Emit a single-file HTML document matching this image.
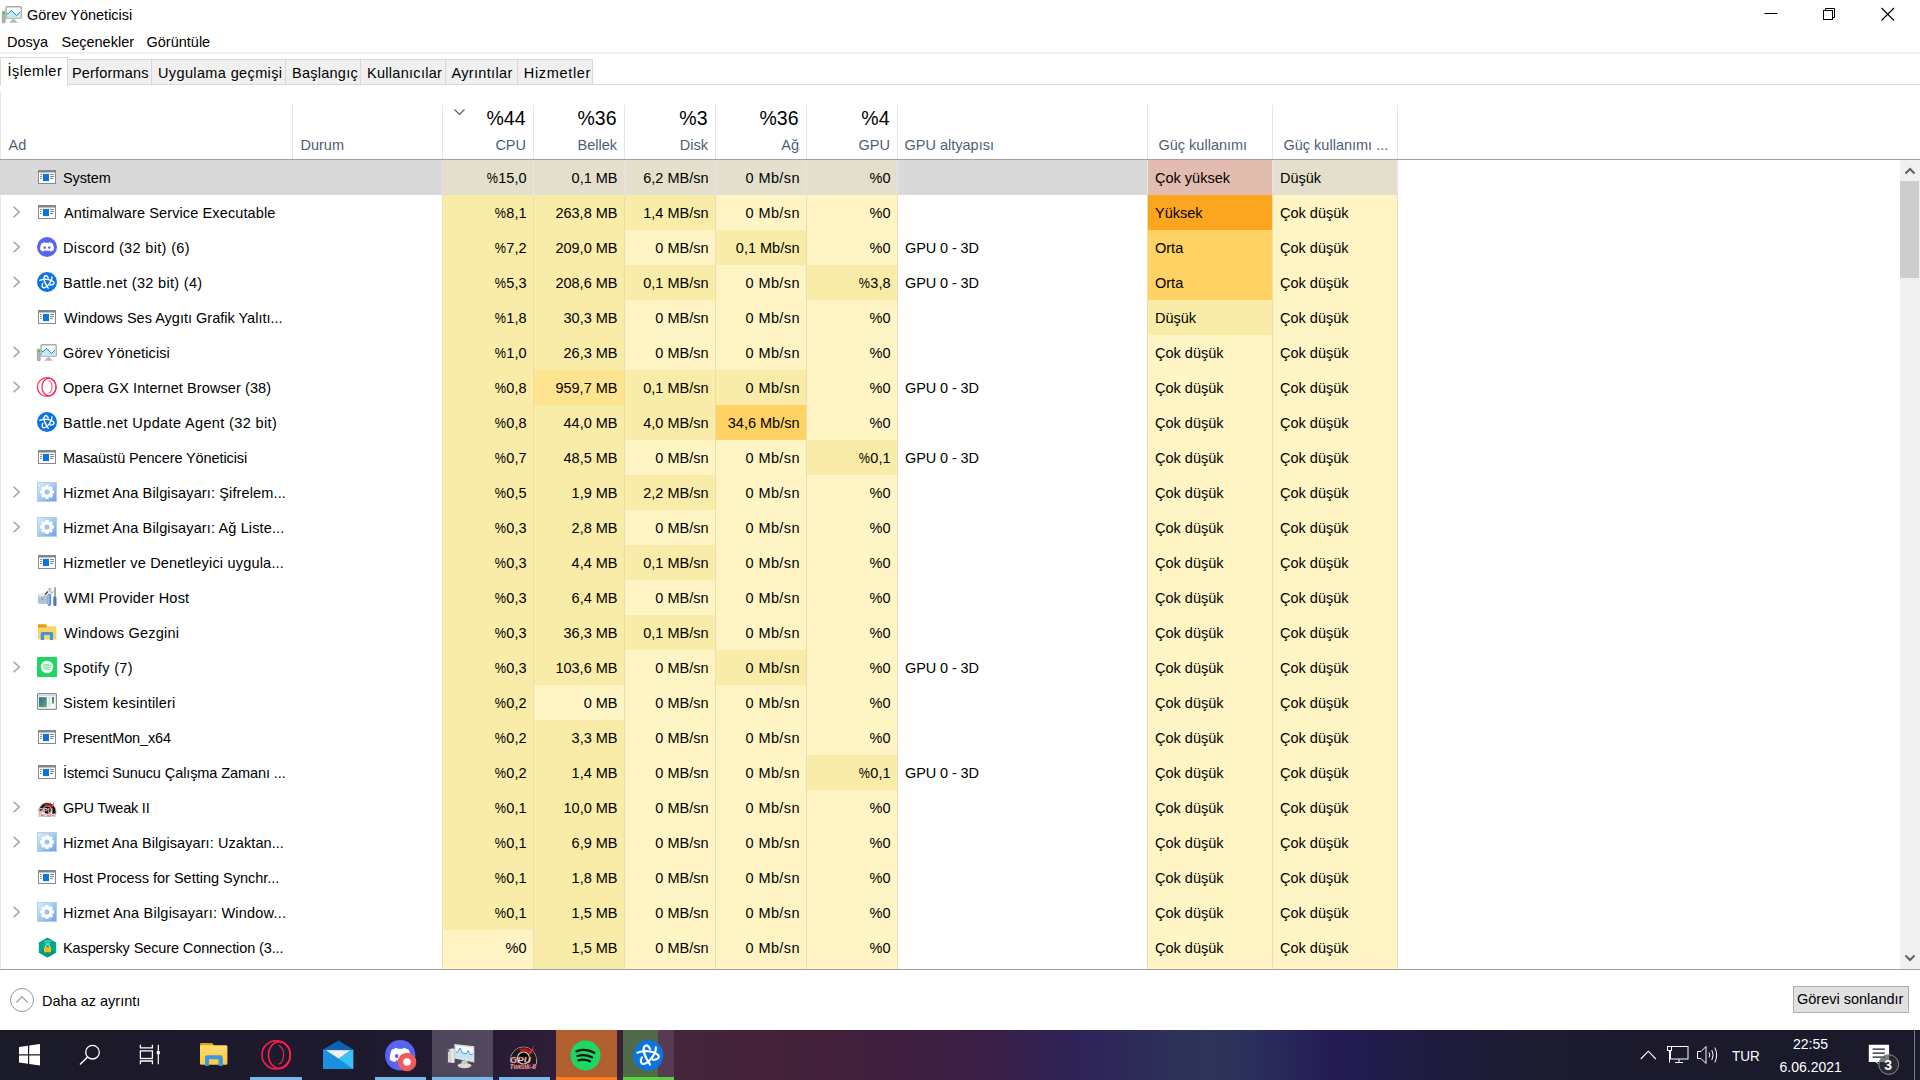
<!DOCTYPE html><html><head><meta charset='utf-8'><style>
*{margin:0;padding:0;box-sizing:border-box}
html,body{width:1920px;height:1080px;overflow:hidden;background:#fff;font-family:"Liberation Sans",sans-serif;color:#000}
.t{position:absolute;white-space:nowrap}
.r{position:absolute}
svg{position:absolute;overflow:visible}
</style></head><body><svg style="left:2px;top:6px" width="20" height="18" viewBox="0 0 20 18"><rect x="0.3" y="5.2" width="2.9" height="11.6" rx="0.9" fill="#b4b4b4" stroke="#8c8c8c" stroke-width="0.6"/><rect x="0.7" y="6.1" width="2.1" height="2" fill="#35d235"/><path d="M7 16.8 L11.5 12.6 L16 16.8 Z" fill="#b9b9b9"/><rect x="4.1" y="0.75" width="15.1" height="11.4" rx="0.8" fill="#fff" stroke="#ababab" stroke-width="1.4"/><path d="M5 7.6 L6.3 7.6 L9.5 4.3 L14.5 9.6 L17.7 6.4 L18.5 6.4 V11.4 H5 Z" fill="#c2ebfa"/><path d="M5 7.6 L6.3 7.6 L9.5 4.3 L14.5 9.6 L18 6.2" fill="none" stroke="#1b7fc9" stroke-width="1"/></svg><div class="t" style="top:7.72px;font-size:14.5px;line-height:14.5px;left:27.00px;">Görev Yöneticisi</div><svg style="left:1760px;top:0px" width="140" height="30"><line x1="4.5" y1="13.5" x2="17.5" y2="13.5" stroke="#000" stroke-width="1"/><rect x="63.5" y="10.5" width="9" height="9" fill="none" stroke="#000" stroke-width="1"/><path d="M65.5 10.5 V8.5 H74.5 V17.5 H72.5" fill="none" stroke="#000" stroke-width="1"/><path d="M121.5 8 L134 20.5 M134 8 L121.5 20.5" stroke="#000" stroke-width="1.1"/></svg><div class="t" style="top:34.72px;font-size:14.5px;line-height:14.5px;left:7.00px;">Dosya</div><div class="t" style="top:34.72px;font-size:14.5px;line-height:14.5px;left:61.50px;">Seçenekler</div><div class="t" style="top:34.72px;font-size:14.5px;line-height:14.5px;left:146.50px;">Görüntüle</div><div class="r" style="left:0px;top:52px;width:1920px;height:2px;background:#f0f0f0;"></div><div class="r" style="left:0px;top:84px;width:1920px;height:1px;background:#d9d9d9;"></div><div class="r" style="left:67px;top:59px;width:85px;height:26px;background:#f0f0f0;border:1px solid #d9d9d9;"></div><div class="t" style="top:66.02px;font-size:14.5px;line-height:14.5px;left:72.00px;letter-spacing:0.17px">Performans</div><div class="r" style="left:151px;top:59px;width:135px;height:26px;background:#f0f0f0;border:1px solid #d9d9d9;"></div><div class="t" style="top:66.02px;font-size:14.5px;line-height:14.5px;left:158.00px;letter-spacing:0.37px">Uygulama geçmişi</div><div class="r" style="left:285px;top:59px;width:76px;height:26px;background:#f0f0f0;border:1px solid #d9d9d9;"></div><div class="t" style="top:66.02px;font-size:14.5px;line-height:14.5px;left:292.00px;letter-spacing:0.25px">Başlangıç</div><div class="r" style="left:360px;top:59px;width:86px;height:26px;background:#f0f0f0;border:1px solid #d9d9d9;"></div><div class="t" style="top:66.02px;font-size:14.5px;line-height:14.5px;left:367.00px;letter-spacing:0.29px">Kullanıcılar</div><div class="r" style="left:445px;top:59px;width:73px;height:26px;background:#f0f0f0;border:1px solid #d9d9d9;"></div><div class="t" style="top:66.02px;font-size:14.5px;line-height:14.5px;left:451.50px;letter-spacing:0.33px">Ayrıntılar</div><div class="r" style="left:517px;top:59px;width:76px;height:26px;background:#f0f0f0;border:1px solid #d9d9d9;"></div><div class="t" style="top:66.02px;font-size:14.5px;line-height:14.5px;left:523.80px;letter-spacing:0.67px">Hizmetler</div><div class="r" style="left:0px;top:57px;width:68px;height:29px;background:#fff;border:1px solid #d9d9d9;border-bottom:none;"></div><div class="t" style="top:63.52px;font-size:14.5px;line-height:14.5px;left:7.50px;letter-spacing:0.5px">İşlemler</div><div class="r" style="left:0px;top:92px;width:1px;height:877px;background:#e6e6e6;"></div><div class="r" style="left:292px;top:105px;width:1px;height:54px;background:#e5e5e5;"></div><div class="r" style="left:442px;top:105px;width:1px;height:54px;background:#e5e5e5;"></div><div class="r" style="left:533px;top:105px;width:1px;height:54px;background:#e5e5e5;"></div><div class="r" style="left:624px;top:105px;width:1px;height:54px;background:#e5e5e5;"></div><div class="r" style="left:715px;top:105px;width:1px;height:54px;background:#e5e5e5;"></div><div class="r" style="left:806px;top:105px;width:1px;height:54px;background:#e5e5e5;"></div><div class="r" style="left:897px;top:105px;width:1px;height:54px;background:#e5e5e5;"></div><div class="r" style="left:1147px;top:105px;width:1px;height:54px;background:#e5e5e5;"></div><div class="r" style="left:1272px;top:105px;width:1px;height:54px;background:#e5e5e5;"></div><div class="r" style="left:1397px;top:105px;width:1px;height:54px;background:#e5e5e5;"></div><div class="r" style="left:0px;top:159px;width:1920px;height:1px;background:#a0a0a0;"></div><div class="t" style="top:137.52px;font-size:14.5px;line-height:14.5px;color:#4c607a;left:8.50px;">Ad</div><div class="t" style="top:137.52px;font-size:14.5px;line-height:14.5px;color:#4c607a;left:300.50px;">Durum</div><div class="t" style="top:109.49px;font-size:19.5px;line-height:19.5px;right:1394.50px;">%44</div><div class="t" style="top:137.52px;font-size:14.5px;line-height:14.5px;color:#4c607a;right:1394.00px;">CPU</div><div class="t" style="top:109.49px;font-size:19.5px;line-height:19.5px;right:1303.50px;">%36</div><div class="t" style="top:137.52px;font-size:14.5px;line-height:14.5px;color:#4c607a;right:1303.00px;">Bellek</div><div class="t" style="top:109.49px;font-size:19.5px;line-height:19.5px;right:1212.50px;">%3</div><div class="t" style="top:137.52px;font-size:14.5px;line-height:14.5px;color:#4c607a;right:1212.00px;">Disk</div><div class="t" style="top:109.49px;font-size:19.5px;line-height:19.5px;right:1121.50px;">%36</div><div class="t" style="top:137.52px;font-size:14.5px;line-height:14.5px;color:#4c607a;right:1121.00px;">Ağ</div><div class="t" style="top:109.49px;font-size:19.5px;line-height:19.5px;right:1030.50px;">%4</div><div class="t" style="top:137.52px;font-size:14.5px;line-height:14.5px;color:#4c607a;right:1030.00px;">GPU</div><div class="t" style="top:137.52px;font-size:14.5px;line-height:14.5px;color:#4c607a;left:904.50px;">GPU altyapısı</div><div class="t" style="top:137.52px;font-size:14.5px;line-height:14.5px;color:#4c607a;left:1158.50px;">Güç kullanımı</div><div class="t" style="top:137.52px;font-size:14.5px;line-height:14.5px;color:#4c607a;left:1283.50px;">Güç kullanımı ...</div><svg style="left:453px;top:108px" width="14" height="10"><path d="M1.5 1.5 L6.5 6.5 L11.5 1.5" fill="none" stroke="#4c607a" stroke-width="1.2"/></svg><div class="r" style="left:0px;top:160px;width:1147px;height:35px;background:#d9d9d9;"></div><div class="r" style="left:442px;top:160px;width:91px;height:35px;background:#e3dfcc;"></div><div class="r" style="left:533px;top:160px;width:91px;height:35px;background:#e3dfcc;"></div><div class="r" style="left:624px;top:160px;width:91px;height:35px;background:#e3dfcc;"></div><div class="r" style="left:715px;top:160px;width:91px;height:35px;background:#e3dfcc;"></div><div class="r" style="left:806px;top:160px;width:91px;height:35px;background:#e3dfcc;"></div><div class="r" style="left:1147px;top:160px;width:125px;height:35px;background:#e2bcae;"></div><div class="r" style="left:1272px;top:160px;width:125px;height:35px;background:#e3dfcc;"></div><svg style="left:38px;top:170px" width="18" height="14" viewBox="0 0 18 14"><rect x="0.5" y="0.5" width="17" height="13" fill="#fff" stroke="#868a8e" stroke-width="1"/><rect x="0.5" y="0.5" width="17" height="2" fill="#7e8387"/><rect x="12.6" y="1.7" width="0.9" height="0.8" fill="#c8cacc"/><rect x="14.4" y="1.7" width="0.9" height="0.8" fill="#c8cacc"/><rect x="5" y="3.9" width="6" height="7.2" fill="#0a74da"/><path d="M2.1 4.5h1.7M2.1 6.5h1.7M2.1 8.5h1.7M12.2 4.5h3.7M12.2 6.5h3.7M12.2 8.5h2.7" stroke="#7c7c7c" stroke-width="1"/></svg><div class="t" style="top:171.22px;font-size:14.5px;line-height:14.5px;left:63.00px;letter-spacing:-0.1px">System</div><div class="t" style="top:171.22px;font-size:14.5px;line-height:14.5px;right:1393.50px;"><span style="display:inline-block;transform:scaleX(0.87);transform-origin:100% 50%">%</span>15,0</div><div class="t" style="top:171.22px;font-size:14.5px;line-height:14.5px;right:1302.50px;">0,1 MB</div><div class="t" style="top:171.22px;font-size:14.5px;line-height:14.5px;right:1211.50px;">6,2 MB/sn</div><div class="t" style="top:171.22px;font-size:14.5px;line-height:14.5px;right:1120.10px;letter-spacing:0.4px;">0 Mb/sn</div><div class="t" style="top:171.22px;font-size:14.5px;line-height:14.5px;right:1029.50px;">%0</div><div class="t" style="top:171.22px;font-size:14.5px;line-height:14.5px;left:1155.00px;">Çok yüksek</div><div class="t" style="top:171.22px;font-size:14.5px;line-height:14.5px;left:1280.00px;">Düşük</div><div class="r" style="left:442px;top:195px;width:91px;height:35px;background:#f9eca8;"></div><div class="r" style="left:533px;top:195px;width:91px;height:35px;background:#f9eca8;"></div><div class="r" style="left:624px;top:195px;width:91px;height:35px;background:#f9eca8;"></div><div class="r" style="left:715px;top:195px;width:91px;height:35px;background:#fff4c4;"></div><div class="r" style="left:806px;top:195px;width:91px;height:35px;background:#fff4c4;"></div><div class="r" style="left:1147px;top:195px;width:125px;height:35px;background:#fca61f;"></div><div class="r" style="left:1272px;top:195px;width:125px;height:35px;background:#fff4c4;"></div><svg style="left:12px;top:206px" width="10" height="13"><path d="M1.6 0.8 L7.2 6 L1.6 11.2" fill="none" stroke="#a2a2a2" stroke-width="1.5"/></svg><svg style="left:38px;top:205px" width="18" height="14" viewBox="0 0 18 14"><rect x="0.5" y="0.5" width="17" height="13" fill="#fff" stroke="#868a8e" stroke-width="1"/><rect x="0.5" y="0.5" width="17" height="2" fill="#7e8387"/><rect x="12.6" y="1.7" width="0.9" height="0.8" fill="#c8cacc"/><rect x="14.4" y="1.7" width="0.9" height="0.8" fill="#c8cacc"/><rect x="5" y="3.9" width="6" height="7.2" fill="#0a74da"/><path d="M2.1 4.5h1.7M2.1 6.5h1.7M2.1 8.5h1.7M12.2 4.5h3.7M12.2 6.5h3.7M12.2 8.5h2.7" stroke="#7c7c7c" stroke-width="1"/></svg><div class="t" style="top:206.22px;font-size:14.5px;line-height:14.5px;left:64.00px;letter-spacing:0.119px">Antimalware Service Executable</div><div class="t" style="top:206.22px;font-size:14.5px;line-height:14.5px;right:1393.50px;"><span style="display:inline-block;transform:scaleX(0.87);transform-origin:100% 50%">%</span>8,1</div><div class="t" style="top:206.22px;font-size:14.5px;line-height:14.5px;right:1302.50px;">263,8 MB</div><div class="t" style="top:206.22px;font-size:14.5px;line-height:14.5px;right:1211.50px;">1,4 MB/sn</div><div class="t" style="top:206.22px;font-size:14.5px;line-height:14.5px;right:1120.10px;letter-spacing:0.4px;">0 Mb/sn</div><div class="t" style="top:206.22px;font-size:14.5px;line-height:14.5px;right:1029.50px;">%0</div><div class="t" style="top:206.22px;font-size:14.5px;line-height:14.5px;left:1155.00px;">Yüksek</div><div class="t" style="top:206.22px;font-size:14.5px;line-height:14.5px;left:1280.00px;">Çok düşük</div><div class="r" style="left:442px;top:230px;width:91px;height:35px;background:#f9eca8;"></div><div class="r" style="left:533px;top:230px;width:91px;height:35px;background:#f9eca8;"></div><div class="r" style="left:624px;top:230px;width:91px;height:35px;background:#fff4c4;"></div><div class="r" style="left:715px;top:230px;width:91px;height:35px;background:#f9eca8;"></div><div class="r" style="left:806px;top:230px;width:91px;height:35px;background:#fff4c4;"></div><div class="r" style="left:1147px;top:230px;width:125px;height:35px;background:#ffd264;"></div><div class="r" style="left:1272px;top:230px;width:125px;height:35px;background:#fff4c4;"></div><svg style="left:12px;top:241px" width="10" height="13"><path d="M1.6 0.8 L7.2 6 L1.6 11.2" fill="none" stroke="#a2a2a2" stroke-width="1.5"/></svg><svg style="left:37px;top:237px" width="20" height="20" viewBox="0 0 20 20"><circle cx="10" cy="10" r="10" fill="#5865f2"/><g transform="translate(10,10) scale(1.0)"><path d="M-5.6 -3.6 C-4.2 -4.5 -2.8 -4.8 -2 -4.8 L-1.6 -4.1 C-0.5 -4.3 0.5 -4.3 1.6 -4.1 L2 -4.8 C2.8 -4.8 4.2 -4.5 5.6 -3.6 C6.6 -1.6 7 0.8 6.8 3 C5.6 3.9 4.4 4.4 3.4 4.6 L2.6 3.4 C1 3.9 -1 3.9 -2.6 3.4 L-3.4 4.6 C-4.4 4.4 -5.6 3.9 -6.8 3 C-7 0.8 -6.6 -1.6 -5.6 -3.6 Z" fill="#fff"/><ellipse cx="-2.3" cy="0.6" rx="1.2" ry="1.35" fill="#5865f2"/><ellipse cx="2.3" cy="0.6" rx="1.2" ry="1.35" fill="#5865f2"/></g></svg><div class="t" style="top:241.22px;font-size:14.5px;line-height:14.5px;left:63.00px;letter-spacing:0.342px">Discord (32 bit) (6)</div><div class="t" style="top:241.22px;font-size:14.5px;line-height:14.5px;right:1393.50px;"><span style="display:inline-block;transform:scaleX(0.87);transform-origin:100% 50%">%</span>7,2</div><div class="t" style="top:241.22px;font-size:14.5px;line-height:14.5px;right:1302.50px;">209,0 MB</div><div class="t" style="top:241.22px;font-size:14.5px;line-height:14.5px;right:1211.50px;">0 MB/sn</div><div class="t" style="top:241.22px;font-size:14.5px;line-height:14.5px;right:1120.50px;">0,1 Mb/sn</div><div class="t" style="top:241.22px;font-size:14.5px;line-height:14.5px;right:1029.50px;">%0</div><div class="t" style="top:241.22px;font-size:14.5px;line-height:14.5px;left:905.00px;letter-spacing:-0.1px">GPU 0 - 3D</div><div class="t" style="top:241.22px;font-size:14.5px;line-height:14.5px;left:1155.00px;">Orta</div><div class="t" style="top:241.22px;font-size:14.5px;line-height:14.5px;left:1280.00px;">Çok düşük</div><div class="r" style="left:442px;top:265px;width:91px;height:35px;background:#f9eca8;"></div><div class="r" style="left:533px;top:265px;width:91px;height:35px;background:#f9eca8;"></div><div class="r" style="left:624px;top:265px;width:91px;height:35px;background:#f9eca8;"></div><div class="r" style="left:715px;top:265px;width:91px;height:35px;background:#fff4c4;"></div><div class="r" style="left:806px;top:265px;width:91px;height:35px;background:#f9eca8;"></div><div class="r" style="left:1147px;top:265px;width:125px;height:35px;background:#ffd264;"></div><div class="r" style="left:1272px;top:265px;width:125px;height:35px;background:#fff4c4;"></div><svg style="left:12px;top:276px" width="10" height="13"><path d="M1.6 0.8 L7.2 6 L1.6 11.2" fill="none" stroke="#a2a2a2" stroke-width="1.5"/></svg><svg style="left:37px;top:272px" width="20" height="20" viewBox="0 0 20 20"><circle cx="10" cy="10" r="10" fill="#0a74e0"/><g transform="scale(0.6666666666666666)" fill="none" stroke="#fff" stroke-linecap="round"><path d="M16.8 24.2 C12 17 8.5 8.5 12 5.8 C14 4.5 16 6.5 16.8 9" stroke-width="2.2"/><path d="M4.2 12.5 C10 10.2 20 10.2 24.8 14.8 C27 17.5 23.5 19.8 19.5 19.5" stroke-width="2.1"/><path d="M22.5 7.3 C23 13 16.5 22 11.5 23.5 C8 24.5 6.5 21 8.8 17.2" stroke-width="2.1"/></g></svg><div class="t" style="top:276.22px;font-size:14.5px;line-height:14.5px;left:63.00px;letter-spacing:0.318px">Battle.net (32 bit) (4)</div><div class="t" style="top:276.22px;font-size:14.5px;line-height:14.5px;right:1393.50px;"><span style="display:inline-block;transform:scaleX(0.87);transform-origin:100% 50%">%</span>5,3</div><div class="t" style="top:276.22px;font-size:14.5px;line-height:14.5px;right:1302.50px;">208,6 MB</div><div class="t" style="top:276.22px;font-size:14.5px;line-height:14.5px;right:1211.50px;">0,1 MB/sn</div><div class="t" style="top:276.22px;font-size:14.5px;line-height:14.5px;right:1120.10px;letter-spacing:0.4px;">0 Mb/sn</div><div class="t" style="top:276.22px;font-size:14.5px;line-height:14.5px;right:1029.50px;"><span style="display:inline-block;transform:scaleX(0.87);transform-origin:100% 50%">%</span>3,8</div><div class="t" style="top:276.22px;font-size:14.5px;line-height:14.5px;left:905.00px;letter-spacing:-0.1px">GPU 0 - 3D</div><div class="t" style="top:276.22px;font-size:14.5px;line-height:14.5px;left:1155.00px;">Orta</div><div class="t" style="top:276.22px;font-size:14.5px;line-height:14.5px;left:1280.00px;">Çok düşük</div><div class="r" style="left:442px;top:300px;width:91px;height:35px;background:#f9eca8;"></div><div class="r" style="left:533px;top:300px;width:91px;height:35px;background:#f9eca8;"></div><div class="r" style="left:624px;top:300px;width:91px;height:35px;background:#fff4c4;"></div><div class="r" style="left:715px;top:300px;width:91px;height:35px;background:#fff4c4;"></div><div class="r" style="left:806px;top:300px;width:91px;height:35px;background:#fff4c4;"></div><div class="r" style="left:1147px;top:300px;width:125px;height:35px;background:#f9eca8;"></div><div class="r" style="left:1272px;top:300px;width:125px;height:35px;background:#fff4c4;"></div><svg style="left:38px;top:310px" width="18" height="14" viewBox="0 0 18 14"><rect x="0.5" y="0.5" width="17" height="13" fill="#fff" stroke="#868a8e" stroke-width="1"/><rect x="0.5" y="0.5" width="17" height="2" fill="#7e8387"/><rect x="12.6" y="1.7" width="0.9" height="0.8" fill="#c8cacc"/><rect x="14.4" y="1.7" width="0.9" height="0.8" fill="#c8cacc"/><rect x="5" y="3.9" width="6" height="7.2" fill="#0a74da"/><path d="M2.1 4.5h1.7M2.1 6.5h1.7M2.1 8.5h1.7M12.2 4.5h3.7M12.2 6.5h3.7M12.2 8.5h2.7" stroke="#7c7c7c" stroke-width="1"/></svg><div class="t" style="top:311.22px;font-size:14.5px;line-height:14.5px;left:64.00px;letter-spacing:0.007px">Windows Ses Aygıtı Grafik Yalıtı...</div><div class="t" style="top:311.22px;font-size:14.5px;line-height:14.5px;right:1393.50px;"><span style="display:inline-block;transform:scaleX(0.87);transform-origin:100% 50%">%</span>1,8</div><div class="t" style="top:311.22px;font-size:14.5px;line-height:14.5px;right:1302.50px;">30,3 MB</div><div class="t" style="top:311.22px;font-size:14.5px;line-height:14.5px;right:1211.50px;">0 MB/sn</div><div class="t" style="top:311.22px;font-size:14.5px;line-height:14.5px;right:1120.10px;letter-spacing:0.4px;">0 Mb/sn</div><div class="t" style="top:311.22px;font-size:14.5px;line-height:14.5px;right:1029.50px;">%0</div><div class="t" style="top:311.22px;font-size:14.5px;line-height:14.5px;left:1155.00px;">Düşük</div><div class="t" style="top:311.22px;font-size:14.5px;line-height:14.5px;left:1280.00px;">Çok düşük</div><div class="r" style="left:442px;top:335px;width:91px;height:35px;background:#f9eca8;"></div><div class="r" style="left:533px;top:335px;width:91px;height:35px;background:#f9eca8;"></div><div class="r" style="left:624px;top:335px;width:91px;height:35px;background:#fff4c4;"></div><div class="r" style="left:715px;top:335px;width:91px;height:35px;background:#fff4c4;"></div><div class="r" style="left:806px;top:335px;width:91px;height:35px;background:#fff4c4;"></div><div class="r" style="left:1147px;top:335px;width:125px;height:35px;background:#fff4c4;"></div><div class="r" style="left:1272px;top:335px;width:125px;height:35px;background:#fff4c4;"></div><svg style="left:12px;top:346px" width="10" height="13"><path d="M1.6 0.8 L7.2 6 L1.6 11.2" fill="none" stroke="#a2a2a2" stroke-width="1.5"/></svg><svg style="left:37px;top:344px" width="20" height="18" viewBox="0 0 20 18"><rect x="0.3" y="5.2" width="2.9" height="11.6" rx="0.9" fill="#b4b4b4" stroke="#8c8c8c" stroke-width="0.6"/><rect x="0.7" y="6.1" width="2.1" height="2" fill="#35d235"/><path d="M7 16.8 L11.5 12.6 L16 16.8 Z" fill="#b9b9b9"/><rect x="4.1" y="0.75" width="15.1" height="11.4" rx="0.8" fill="#fff" stroke="#ababab" stroke-width="1.4"/><path d="M5 7.6 L6.3 7.6 L9.5 4.3 L14.5 9.6 L17.7 6.4 L18.5 6.4 V11.4 H5 Z" fill="#c2ebfa"/><path d="M5 7.6 L6.3 7.6 L9.5 4.3 L14.5 9.6 L18 6.2" fill="none" stroke="#1b7fc9" stroke-width="1"/></svg><div class="t" style="top:346.22px;font-size:14.5px;line-height:14.5px;left:63.00px;letter-spacing:0.1px">Görev Yöneticisi</div><div class="t" style="top:346.22px;font-size:14.5px;line-height:14.5px;right:1393.50px;"><span style="display:inline-block;transform:scaleX(0.87);transform-origin:100% 50%">%</span>1,0</div><div class="t" style="top:346.22px;font-size:14.5px;line-height:14.5px;right:1302.50px;">26,3 MB</div><div class="t" style="top:346.22px;font-size:14.5px;line-height:14.5px;right:1211.50px;">0 MB/sn</div><div class="t" style="top:346.22px;font-size:14.5px;line-height:14.5px;right:1120.10px;letter-spacing:0.4px;">0 Mb/sn</div><div class="t" style="top:346.22px;font-size:14.5px;line-height:14.5px;right:1029.50px;">%0</div><div class="t" style="top:346.22px;font-size:14.5px;line-height:14.5px;left:1155.00px;">Çok düşük</div><div class="t" style="top:346.22px;font-size:14.5px;line-height:14.5px;left:1280.00px;">Çok düşük</div><div class="r" style="left:442px;top:370px;width:91px;height:35px;background:#f9eca8;"></div><div class="r" style="left:533px;top:370px;width:91px;height:35px;background:#ffe48f;"></div><div class="r" style="left:624px;top:370px;width:91px;height:35px;background:#f9eca8;"></div><div class="r" style="left:715px;top:370px;width:91px;height:35px;background:#f9eca8;"></div><div class="r" style="left:806px;top:370px;width:91px;height:35px;background:#fff4c4;"></div><div class="r" style="left:1147px;top:370px;width:125px;height:35px;background:#fff4c4;"></div><div class="r" style="left:1272px;top:370px;width:125px;height:35px;background:#fff4c4;"></div><svg style="left:12px;top:381px" width="10" height="13"><path d="M1.6 0.8 L7.2 6 L1.6 11.2" fill="none" stroke="#a2a2a2" stroke-width="1.5"/></svg><svg style="left:37px;top:377px" width="20" height="20" viewBox="0 0 20 20"><g transform="scale(0.6666666666666666)"><circle cx="14.6" cy="15" r="14" fill="none" stroke="#ff2e5c" stroke-width="2"/><ellipse cx="18" cy="15" rx="10.6" ry="13.2" fill="none" stroke="#ff2e5c" stroke-width="2"/><path d="M17.5 5.3 A5.7 9.5 0 0 1 17.5 24.1" fill="none" stroke="#ff2e5c" stroke-width="1.5"/></g></svg><div class="t" style="top:381.22px;font-size:14.5px;line-height:14.5px;left:63.00px;letter-spacing:0.087px">Opera GX Internet Browser (38)</div><div class="t" style="top:381.22px;font-size:14.5px;line-height:14.5px;right:1393.50px;"><span style="display:inline-block;transform:scaleX(0.87);transform-origin:100% 50%">%</span>0,8</div><div class="t" style="top:381.22px;font-size:14.5px;line-height:14.5px;right:1302.50px;">959,7 MB</div><div class="t" style="top:381.22px;font-size:14.5px;line-height:14.5px;right:1211.50px;">0,1 MB/sn</div><div class="t" style="top:381.22px;font-size:14.5px;line-height:14.5px;right:1120.10px;letter-spacing:0.4px;">0 Mb/sn</div><div class="t" style="top:381.22px;font-size:14.5px;line-height:14.5px;right:1029.50px;">%0</div><div class="t" style="top:381.22px;font-size:14.5px;line-height:14.5px;left:905.00px;letter-spacing:-0.1px">GPU 0 - 3D</div><div class="t" style="top:381.22px;font-size:14.5px;line-height:14.5px;left:1155.00px;">Çok düşük</div><div class="t" style="top:381.22px;font-size:14.5px;line-height:14.5px;left:1280.00px;">Çok düşük</div><div class="r" style="left:442px;top:405px;width:91px;height:35px;background:#f9eca8;"></div><div class="r" style="left:533px;top:405px;width:91px;height:35px;background:#f9eca8;"></div><div class="r" style="left:624px;top:405px;width:91px;height:35px;background:#f9eca8;"></div><div class="r" style="left:715px;top:405px;width:91px;height:35px;background:#ffd264;"></div><div class="r" style="left:806px;top:405px;width:91px;height:35px;background:#fff4c4;"></div><div class="r" style="left:1147px;top:405px;width:125px;height:35px;background:#fff4c4;"></div><div class="r" style="left:1272px;top:405px;width:125px;height:35px;background:#fff4c4;"></div><svg style="left:37px;top:412px" width="20" height="20" viewBox="0 0 20 20"><circle cx="10" cy="10" r="10" fill="#0a74e0"/><g transform="scale(0.6666666666666666)" fill="none" stroke="#fff" stroke-linecap="round"><path d="M16.8 24.2 C12 17 8.5 8.5 12 5.8 C14 4.5 16 6.5 16.8 9" stroke-width="2.2"/><path d="M4.2 12.5 C10 10.2 20 10.2 24.8 14.8 C27 17.5 23.5 19.8 19.5 19.5" stroke-width="2.1"/><path d="M22.5 7.3 C23 13 16.5 22 11.5 23.5 C8 24.5 6.5 21 8.8 17.2" stroke-width="2.1"/></g></svg><div class="t" style="top:416.22px;font-size:14.5px;line-height:14.5px;left:63.00px;letter-spacing:0.371px">Battle.net Update Agent (32 bit)</div><div class="t" style="top:416.22px;font-size:14.5px;line-height:14.5px;right:1393.50px;"><span style="display:inline-block;transform:scaleX(0.87);transform-origin:100% 50%">%</span>0,8</div><div class="t" style="top:416.22px;font-size:14.5px;line-height:14.5px;right:1302.50px;">44,0 MB</div><div class="t" style="top:416.22px;font-size:14.5px;line-height:14.5px;right:1211.50px;">4,0 MB/sn</div><div class="t" style="top:416.22px;font-size:14.5px;line-height:14.5px;right:1120.50px;">34,6 Mb/sn</div><div class="t" style="top:416.22px;font-size:14.5px;line-height:14.5px;right:1029.50px;">%0</div><div class="t" style="top:416.22px;font-size:14.5px;line-height:14.5px;left:1155.00px;">Çok düşük</div><div class="t" style="top:416.22px;font-size:14.5px;line-height:14.5px;left:1280.00px;">Çok düşük</div><div class="r" style="left:442px;top:440px;width:91px;height:35px;background:#f9eca8;"></div><div class="r" style="left:533px;top:440px;width:91px;height:35px;background:#f9eca8;"></div><div class="r" style="left:624px;top:440px;width:91px;height:35px;background:#fff4c4;"></div><div class="r" style="left:715px;top:440px;width:91px;height:35px;background:#fff4c4;"></div><div class="r" style="left:806px;top:440px;width:91px;height:35px;background:#f9eca8;"></div><div class="r" style="left:1147px;top:440px;width:125px;height:35px;background:#fff4c4;"></div><div class="r" style="left:1272px;top:440px;width:125px;height:35px;background:#fff4c4;"></div><svg style="left:38px;top:450px" width="18" height="14" viewBox="0 0 18 14"><rect x="0.5" y="0.5" width="17" height="13" fill="#fff" stroke="#868a8e" stroke-width="1"/><rect x="0.5" y="0.5" width="17" height="2" fill="#7e8387"/><rect x="12.6" y="1.7" width="0.9" height="0.8" fill="#c8cacc"/><rect x="14.4" y="1.7" width="0.9" height="0.8" fill="#c8cacc"/><rect x="5" y="3.9" width="6" height="7.2" fill="#0a74da"/><path d="M2.1 4.5h1.7M2.1 6.5h1.7M2.1 8.5h1.7M12.2 4.5h3.7M12.2 6.5h3.7M12.2 8.5h2.7" stroke="#7c7c7c" stroke-width="1"/></svg><div class="t" style="top:451.22px;font-size:14.5px;line-height:14.5px;left:63.00px;letter-spacing:-0.096px">Masaüstü Pencere Yöneticisi</div><div class="t" style="top:451.22px;font-size:14.5px;line-height:14.5px;right:1393.50px;"><span style="display:inline-block;transform:scaleX(0.87);transform-origin:100% 50%">%</span>0,7</div><div class="t" style="top:451.22px;font-size:14.5px;line-height:14.5px;right:1302.50px;">48,5 MB</div><div class="t" style="top:451.22px;font-size:14.5px;line-height:14.5px;right:1211.50px;">0 MB/sn</div><div class="t" style="top:451.22px;font-size:14.5px;line-height:14.5px;right:1120.10px;letter-spacing:0.4px;">0 Mb/sn</div><div class="t" style="top:451.22px;font-size:14.5px;line-height:14.5px;right:1029.50px;"><span style="display:inline-block;transform:scaleX(0.87);transform-origin:100% 50%">%</span>0,1</div><div class="t" style="top:451.22px;font-size:14.5px;line-height:14.5px;left:905.00px;letter-spacing:-0.1px">GPU 0 - 3D</div><div class="t" style="top:451.22px;font-size:14.5px;line-height:14.5px;left:1155.00px;">Çok düşük</div><div class="t" style="top:451.22px;font-size:14.5px;line-height:14.5px;left:1280.00px;">Çok düşük</div><div class="r" style="left:442px;top:475px;width:91px;height:35px;background:#f9eca8;"></div><div class="r" style="left:533px;top:475px;width:91px;height:35px;background:#f9eca8;"></div><div class="r" style="left:624px;top:475px;width:91px;height:35px;background:#f9eca8;"></div><div class="r" style="left:715px;top:475px;width:91px;height:35px;background:#fff4c4;"></div><div class="r" style="left:806px;top:475px;width:91px;height:35px;background:#fff4c4;"></div><div class="r" style="left:1147px;top:475px;width:125px;height:35px;background:#fff4c4;"></div><div class="r" style="left:1272px;top:475px;width:125px;height:35px;background:#fff4c4;"></div><svg style="left:12px;top:486px" width="10" height="13"><path d="M1.6 0.8 L7.2 6 L1.6 11.2" fill="none" stroke="#a2a2a2" stroke-width="1.5"/></svg><svg style="left:37px;top:482px" width="20" height="20" viewBox="0 0 20 20"><defs><linearGradient id="gg" x1="0" y1="0" x2="1" y2="1"><stop offset="0" stop-color="#d2f3ff"/><stop offset="1" stop-color="#6f9fe6"/></linearGradient></defs><rect x="0.5" y="0.5" width="19" height="19" fill="url(#gg)" stroke="#b9cde3" stroke-width="1"/><path d="M17.03 8.43 L17.03 11.57 L14.96 11.87 L14.83 12.19 L16.08 13.86 L13.86 16.08 L12.19 14.83 L11.87 14.96 L11.57 17.03 L8.43 17.03 L8.13 14.96 L7.81 14.83 L6.14 16.08 L3.92 13.86 L5.17 12.19 L5.04 11.87 L2.97 11.57 L2.97 8.43 L5.04 8.13 L5.17 7.81 L3.92 6.14 L6.14 3.92 L7.81 5.17 L8.13 5.04 L8.43 2.97 L11.57 2.97 L11.87 5.04 L12.19 5.17 L13.86 3.92 L16.08 6.14 L14.83 7.81 L14.96 8.13Z" fill="#fff"/><circle cx="10" cy="10" r="2.6" fill="#9cc3ee"/></svg><div class="t" style="top:486.22px;font-size:14.5px;line-height:14.5px;left:63.00px;letter-spacing:0.132px">Hizmet Ana Bilgisayarı: Şifrelem...</div><div class="t" style="top:486.22px;font-size:14.5px;line-height:14.5px;right:1393.50px;"><span style="display:inline-block;transform:scaleX(0.87);transform-origin:100% 50%">%</span>0,5</div><div class="t" style="top:486.22px;font-size:14.5px;line-height:14.5px;right:1302.50px;">1,9 MB</div><div class="t" style="top:486.22px;font-size:14.5px;line-height:14.5px;right:1211.50px;">2,2 MB/sn</div><div class="t" style="top:486.22px;font-size:14.5px;line-height:14.5px;right:1120.10px;letter-spacing:0.4px;">0 Mb/sn</div><div class="t" style="top:486.22px;font-size:14.5px;line-height:14.5px;right:1029.50px;">%0</div><div class="t" style="top:486.22px;font-size:14.5px;line-height:14.5px;left:1155.00px;">Çok düşük</div><div class="t" style="top:486.22px;font-size:14.5px;line-height:14.5px;left:1280.00px;">Çok düşük</div><div class="r" style="left:442px;top:510px;width:91px;height:35px;background:#f9eca8;"></div><div class="r" style="left:533px;top:510px;width:91px;height:35px;background:#f9eca8;"></div><div class="r" style="left:624px;top:510px;width:91px;height:35px;background:#fff4c4;"></div><div class="r" style="left:715px;top:510px;width:91px;height:35px;background:#fff4c4;"></div><div class="r" style="left:806px;top:510px;width:91px;height:35px;background:#fff4c4;"></div><div class="r" style="left:1147px;top:510px;width:125px;height:35px;background:#fff4c4;"></div><div class="r" style="left:1272px;top:510px;width:125px;height:35px;background:#fff4c4;"></div><svg style="left:12px;top:521px" width="10" height="13"><path d="M1.6 0.8 L7.2 6 L1.6 11.2" fill="none" stroke="#a2a2a2" stroke-width="1.5"/></svg><svg style="left:37px;top:517px" width="20" height="20" viewBox="0 0 20 20"><defs><linearGradient id="gg" x1="0" y1="0" x2="1" y2="1"><stop offset="0" stop-color="#d2f3ff"/><stop offset="1" stop-color="#6f9fe6"/></linearGradient></defs><rect x="0.5" y="0.5" width="19" height="19" fill="url(#gg)" stroke="#b9cde3" stroke-width="1"/><path d="M17.03 8.43 L17.03 11.57 L14.96 11.87 L14.83 12.19 L16.08 13.86 L13.86 16.08 L12.19 14.83 L11.87 14.96 L11.57 17.03 L8.43 17.03 L8.13 14.96 L7.81 14.83 L6.14 16.08 L3.92 13.86 L5.17 12.19 L5.04 11.87 L2.97 11.57 L2.97 8.43 L5.04 8.13 L5.17 7.81 L3.92 6.14 L6.14 3.92 L7.81 5.17 L8.13 5.04 L8.43 2.97 L11.57 2.97 L11.87 5.04 L12.19 5.17 L13.86 3.92 L16.08 6.14 L14.83 7.81 L14.96 8.13Z" fill="#fff"/><circle cx="10" cy="10" r="2.6" fill="#9cc3ee"/></svg><div class="t" style="top:521.22px;font-size:14.5px;line-height:14.5px;left:63.00px;letter-spacing:0.132px">Hizmet Ana Bilgisayarı: Ağ Liste...</div><div class="t" style="top:521.22px;font-size:14.5px;line-height:14.5px;right:1393.50px;"><span style="display:inline-block;transform:scaleX(0.87);transform-origin:100% 50%">%</span>0,3</div><div class="t" style="top:521.22px;font-size:14.5px;line-height:14.5px;right:1302.50px;">2,8 MB</div><div class="t" style="top:521.22px;font-size:14.5px;line-height:14.5px;right:1211.50px;">0 MB/sn</div><div class="t" style="top:521.22px;font-size:14.5px;line-height:14.5px;right:1120.10px;letter-spacing:0.4px;">0 Mb/sn</div><div class="t" style="top:521.22px;font-size:14.5px;line-height:14.5px;right:1029.50px;">%0</div><div class="t" style="top:521.22px;font-size:14.5px;line-height:14.5px;left:1155.00px;">Çok düşük</div><div class="t" style="top:521.22px;font-size:14.5px;line-height:14.5px;left:1280.00px;">Çok düşük</div><div class="r" style="left:442px;top:545px;width:91px;height:35px;background:#f9eca8;"></div><div class="r" style="left:533px;top:545px;width:91px;height:35px;background:#f9eca8;"></div><div class="r" style="left:624px;top:545px;width:91px;height:35px;background:#f9eca8;"></div><div class="r" style="left:715px;top:545px;width:91px;height:35px;background:#fff4c4;"></div><div class="r" style="left:806px;top:545px;width:91px;height:35px;background:#fff4c4;"></div><div class="r" style="left:1147px;top:545px;width:125px;height:35px;background:#fff4c4;"></div><div class="r" style="left:1272px;top:545px;width:125px;height:35px;background:#fff4c4;"></div><svg style="left:38px;top:555px" width="18" height="14" viewBox="0 0 18 14"><rect x="0.5" y="0.5" width="17" height="13" fill="#fff" stroke="#868a8e" stroke-width="1"/><rect x="0.5" y="0.5" width="17" height="2" fill="#7e8387"/><rect x="12.6" y="1.7" width="0.9" height="0.8" fill="#c8cacc"/><rect x="14.4" y="1.7" width="0.9" height="0.8" fill="#c8cacc"/><rect x="5" y="3.9" width="6" height="7.2" fill="#0a74da"/><path d="M2.1 4.5h1.7M2.1 6.5h1.7M2.1 8.5h1.7M12.2 4.5h3.7M12.2 6.5h3.7M12.2 8.5h2.7" stroke="#7c7c7c" stroke-width="1"/></svg><div class="t" style="top:556.22px;font-size:14.5px;line-height:14.5px;left:63.00px;letter-spacing:0.197px">Hizmetler ve Denetleyici uygula...</div><div class="t" style="top:556.22px;font-size:14.5px;line-height:14.5px;right:1393.50px;"><span style="display:inline-block;transform:scaleX(0.87);transform-origin:100% 50%">%</span>0,3</div><div class="t" style="top:556.22px;font-size:14.5px;line-height:14.5px;right:1302.50px;">4,4 MB</div><div class="t" style="top:556.22px;font-size:14.5px;line-height:14.5px;right:1211.50px;">0,1 MB/sn</div><div class="t" style="top:556.22px;font-size:14.5px;line-height:14.5px;right:1120.10px;letter-spacing:0.4px;">0 Mb/sn</div><div class="t" style="top:556.22px;font-size:14.5px;line-height:14.5px;right:1029.50px;">%0</div><div class="t" style="top:556.22px;font-size:14.5px;line-height:14.5px;left:1155.00px;">Çok düşük</div><div class="t" style="top:556.22px;font-size:14.5px;line-height:14.5px;left:1280.00px;">Çok düşük</div><div class="r" style="left:442px;top:580px;width:91px;height:35px;background:#f9eca8;"></div><div class="r" style="left:533px;top:580px;width:91px;height:35px;background:#f9eca8;"></div><div class="r" style="left:624px;top:580px;width:91px;height:35px;background:#fff4c4;"></div><div class="r" style="left:715px;top:580px;width:91px;height:35px;background:#fff4c4;"></div><div class="r" style="left:806px;top:580px;width:91px;height:35px;background:#fff4c4;"></div><div class="r" style="left:1147px;top:580px;width:125px;height:35px;background:#fff4c4;"></div><div class="r" style="left:1272px;top:580px;width:125px;height:35px;background:#fff4c4;"></div><svg style="left:37px;top:587px" width="20" height="20" viewBox="0 0 20 20"><path d="M1 7 L12 6.4 L14.3 8 V16.8 L2.2 17 L0.8 15.6 Z" fill="#b3c2cb"/><path d="M1 7 L12 6.4 L14.3 8 L2 9.8 Z" fill="#dfe8ee"/><circle cx="5.5" cy="12" r="0.9" fill="#8a98a2"/><circle cx="11.5" cy="13" r="0.9" fill="#e8eef2"/><path d="M8 7.5 L11 4.5" stroke="#3a3f44" stroke-width="1.2"/><path d="M10.2 2.2 Q12.5 -0.6 15.3 1.6 L13.6 3.4 L14.8 4.7 L16.4 3.2 Q17.4 6.2 14.2 7.2 Z" fill="#c9c9c9"/><rect x="10.6" y="7" width="3.3" height="12" rx="1.4" fill="#5f8ccf"/><rect x="11.2" y="8" width="1" height="9.5" fill="#b7d3f0"/><rect x="17.2" y="0.2" width="1.7" height="10" fill="#9c9c9c"/><rect x="16.3" y="9.6" width="3.2" height="9.4" rx="1.2" fill="#4d78c6"/></svg><div class="t" style="top:591.22px;font-size:14.5px;line-height:14.5px;left:64.00px;letter-spacing:0.218px">WMI Provider Host</div><div class="t" style="top:591.22px;font-size:14.5px;line-height:14.5px;right:1393.50px;"><span style="display:inline-block;transform:scaleX(0.87);transform-origin:100% 50%">%</span>0,3</div><div class="t" style="top:591.22px;font-size:14.5px;line-height:14.5px;right:1302.50px;">6,4 MB</div><div class="t" style="top:591.22px;font-size:14.5px;line-height:14.5px;right:1211.50px;">0 MB/sn</div><div class="t" style="top:591.22px;font-size:14.5px;line-height:14.5px;right:1120.10px;letter-spacing:0.4px;">0 Mb/sn</div><div class="t" style="top:591.22px;font-size:14.5px;line-height:14.5px;right:1029.50px;">%0</div><div class="t" style="top:591.22px;font-size:14.5px;line-height:14.5px;left:1155.00px;">Çok düşük</div><div class="t" style="top:591.22px;font-size:14.5px;line-height:14.5px;left:1280.00px;">Çok düşük</div><div class="r" style="left:442px;top:615px;width:91px;height:35px;background:#f9eca8;"></div><div class="r" style="left:533px;top:615px;width:91px;height:35px;background:#f9eca8;"></div><div class="r" style="left:624px;top:615px;width:91px;height:35px;background:#f9eca8;"></div><div class="r" style="left:715px;top:615px;width:91px;height:35px;background:#fff4c4;"></div><div class="r" style="left:806px;top:615px;width:91px;height:35px;background:#fff4c4;"></div><div class="r" style="left:1147px;top:615px;width:125px;height:35px;background:#fff4c4;"></div><div class="r" style="left:1272px;top:615px;width:125px;height:35px;background:#fff4c4;"></div><svg style="left:38px;top:624px" width="19" height="17" viewBox="0 0 19 17"><rect x="0" y="2.2" width="18.2" height="13.2" rx="0.5" fill="#ffd35e"/><path d="M0 0.3 H7.6 L9.3 2 L7.6 3.8 H0 Z" fill="#dea10a"/><rect x="0" y="3.8" width="8" height="0.8" fill="#ffe08a"/><path d="M2.7 16 V9.6 Q2.7 8 4.3 8 H13.5 Q15.1 8 15.1 9.6 V16 H11.9 V11 H6.1 V16 Z" fill="#3b95e2"/></svg><div class="t" style="top:626.22px;font-size:14.5px;line-height:14.5px;left:64.00px;letter-spacing:0.214px">Windows Gezgini</div><div class="t" style="top:626.22px;font-size:14.5px;line-height:14.5px;right:1393.50px;"><span style="display:inline-block;transform:scaleX(0.87);transform-origin:100% 50%">%</span>0,3</div><div class="t" style="top:626.22px;font-size:14.5px;line-height:14.5px;right:1302.50px;">36,3 MB</div><div class="t" style="top:626.22px;font-size:14.5px;line-height:14.5px;right:1211.50px;">0,1 MB/sn</div><div class="t" style="top:626.22px;font-size:14.5px;line-height:14.5px;right:1120.10px;letter-spacing:0.4px;">0 Mb/sn</div><div class="t" style="top:626.22px;font-size:14.5px;line-height:14.5px;right:1029.50px;">%0</div><div class="t" style="top:626.22px;font-size:14.5px;line-height:14.5px;left:1155.00px;">Çok düşük</div><div class="t" style="top:626.22px;font-size:14.5px;line-height:14.5px;left:1280.00px;">Çok düşük</div><div class="r" style="left:442px;top:650px;width:91px;height:35px;background:#f9eca8;"></div><div class="r" style="left:533px;top:650px;width:91px;height:35px;background:#f9eca8;"></div><div class="r" style="left:624px;top:650px;width:91px;height:35px;background:#fff4c4;"></div><div class="r" style="left:715px;top:650px;width:91px;height:35px;background:#f9eca8;"></div><div class="r" style="left:806px;top:650px;width:91px;height:35px;background:#fff4c4;"></div><div class="r" style="left:1147px;top:650px;width:125px;height:35px;background:#fff4c4;"></div><div class="r" style="left:1272px;top:650px;width:125px;height:35px;background:#fff4c4;"></div><svg style="left:12px;top:661px" width="10" height="13"><path d="M1.6 0.8 L7.2 6 L1.6 11.2" fill="none" stroke="#a2a2a2" stroke-width="1.5"/></svg><svg style="left:37px;top:657px" width="20" height="20" viewBox="0 0 20 20"><rect x="0" y="0" width="20" height="20" fill="#1ed760"/><circle cx="10" cy="10" r="6.2" fill="#fff"/><path d="M6.3 8.3 C8.5 7.4 11.5 7.6 13.8 8.8 M6.8 10.3 C8.8 9.6 11.2 9.8 13.1 10.8 M7.3 12.2 C9 11.7 10.8 11.8 12.4 12.6" fill="none" stroke="#1ed760" stroke-width="0.9" stroke-linecap="round"/></svg><div class="t" style="top:661.22px;font-size:14.5px;line-height:14.5px;left:63.00px;letter-spacing:0.35px">Spotify (7)</div><div class="t" style="top:661.22px;font-size:14.5px;line-height:14.5px;right:1393.50px;"><span style="display:inline-block;transform:scaleX(0.87);transform-origin:100% 50%">%</span>0,3</div><div class="t" style="top:661.22px;font-size:14.5px;line-height:14.5px;right:1302.50px;">103,6 MB</div><div class="t" style="top:661.22px;font-size:14.5px;line-height:14.5px;right:1211.50px;">0 MB/sn</div><div class="t" style="top:661.22px;font-size:14.5px;line-height:14.5px;right:1120.10px;letter-spacing:0.4px;">0 Mb/sn</div><div class="t" style="top:661.22px;font-size:14.5px;line-height:14.5px;right:1029.50px;">%0</div><div class="t" style="top:661.22px;font-size:14.5px;line-height:14.5px;left:905.00px;letter-spacing:-0.1px">GPU 0 - 3D</div><div class="t" style="top:661.22px;font-size:14.5px;line-height:14.5px;left:1155.00px;">Çok düşük</div><div class="t" style="top:661.22px;font-size:14.5px;line-height:14.5px;left:1280.00px;">Çok düşük</div><div class="r" style="left:442px;top:685px;width:91px;height:35px;background:#f9eca8;"></div><div class="r" style="left:533px;top:685px;width:91px;height:35px;background:#fff4c4;"></div><div class="r" style="left:624px;top:685px;width:91px;height:35px;background:#fff4c4;"></div><div class="r" style="left:715px;top:685px;width:91px;height:35px;background:#fff4c4;"></div><div class="r" style="left:806px;top:685px;width:91px;height:35px;background:#fff4c4;"></div><div class="r" style="left:1147px;top:685px;width:125px;height:35px;background:#fff4c4;"></div><div class="r" style="left:1272px;top:685px;width:125px;height:35px;background:#fff4c4;"></div><svg style="left:37px;top:693px" width="20" height="17" viewBox="0 0 20 17"><defs><linearGradient id="ig" x1="0" y1="0" x2="1" y2="1"><stop offset="0" stop-color="#2f5fa8"/><stop offset="1" stop-color="#5bb56a"/></linearGradient><linearGradient id="ig2" x1="0" y1="0" x2="0" y2="1"><stop offset="0" stop-color="#2f5fa8"/><stop offset="1" stop-color="#5bc04f"/></linearGradient></defs><rect x="0.6" y="0.6" width="18.8" height="15.8" rx="1" fill="#fafafa" stroke="#8a8f96" stroke-width="1.2"/><rect x="1.5" y="1.5" width="17" height="1.6" fill="#d5dae3"/><rect x="2" y="4.2" width="7.8" height="10" fill="url(#ig)"/><path d="M11 4.8h2.9M11 6.8h2.9M11 8.8h2.9M11 10.8h2.9M11 12.8h2.9" stroke="#c7c7c7" stroke-width="0.8"/><rect x="15" y="4.2" width="2" height="6.5" fill="url(#ig2)"/></svg><div class="t" style="top:696.22px;font-size:14.5px;line-height:14.5px;left:63.00px;letter-spacing:0.206px">Sistem kesintileri</div><div class="t" style="top:696.22px;font-size:14.5px;line-height:14.5px;right:1393.50px;"><span style="display:inline-block;transform:scaleX(0.87);transform-origin:100% 50%">%</span>0,2</div><div class="t" style="top:696.22px;font-size:14.5px;line-height:14.5px;right:1302.50px;">0 MB</div><div class="t" style="top:696.22px;font-size:14.5px;line-height:14.5px;right:1211.50px;">0 MB/sn</div><div class="t" style="top:696.22px;font-size:14.5px;line-height:14.5px;right:1120.10px;letter-spacing:0.4px;">0 Mb/sn</div><div class="t" style="top:696.22px;font-size:14.5px;line-height:14.5px;right:1029.50px;">%0</div><div class="t" style="top:696.22px;font-size:14.5px;line-height:14.5px;left:1155.00px;">Çok düşük</div><div class="t" style="top:696.22px;font-size:14.5px;line-height:14.5px;left:1280.00px;">Çok düşük</div><div class="r" style="left:442px;top:720px;width:91px;height:35px;background:#f9eca8;"></div><div class="r" style="left:533px;top:720px;width:91px;height:35px;background:#f9eca8;"></div><div class="r" style="left:624px;top:720px;width:91px;height:35px;background:#fff4c4;"></div><div class="r" style="left:715px;top:720px;width:91px;height:35px;background:#fff4c4;"></div><div class="r" style="left:806px;top:720px;width:91px;height:35px;background:#fff4c4;"></div><div class="r" style="left:1147px;top:720px;width:125px;height:35px;background:#fff4c4;"></div><div class="r" style="left:1272px;top:720px;width:125px;height:35px;background:#fff4c4;"></div><svg style="left:38px;top:730px" width="18" height="14" viewBox="0 0 18 14"><rect x="0.5" y="0.5" width="17" height="13" fill="#fff" stroke="#868a8e" stroke-width="1"/><rect x="0.5" y="0.5" width="17" height="2" fill="#7e8387"/><rect x="12.6" y="1.7" width="0.9" height="0.8" fill="#c8cacc"/><rect x="14.4" y="1.7" width="0.9" height="0.8" fill="#c8cacc"/><rect x="5" y="3.9" width="6" height="7.2" fill="#0a74da"/><path d="M2.1 4.5h1.7M2.1 6.5h1.7M2.1 8.5h1.7M12.2 4.5h3.7M12.2 6.5h3.7M12.2 8.5h2.7" stroke="#7c7c7c" stroke-width="1"/></svg><div class="t" style="top:731.22px;font-size:14.5px;line-height:14.5px;left:63.00px;letter-spacing:-0.115px">PresentMon_x64</div><div class="t" style="top:731.22px;font-size:14.5px;line-height:14.5px;right:1393.50px;"><span style="display:inline-block;transform:scaleX(0.87);transform-origin:100% 50%">%</span>0,2</div><div class="t" style="top:731.22px;font-size:14.5px;line-height:14.5px;right:1302.50px;">3,3 MB</div><div class="t" style="top:731.22px;font-size:14.5px;line-height:14.5px;right:1211.50px;">0 MB/sn</div><div class="t" style="top:731.22px;font-size:14.5px;line-height:14.5px;right:1120.10px;letter-spacing:0.4px;">0 Mb/sn</div><div class="t" style="top:731.22px;font-size:14.5px;line-height:14.5px;right:1029.50px;">%0</div><div class="t" style="top:731.22px;font-size:14.5px;line-height:14.5px;left:1155.00px;">Çok düşük</div><div class="t" style="top:731.22px;font-size:14.5px;line-height:14.5px;left:1280.00px;">Çok düşük</div><div class="r" style="left:442px;top:755px;width:91px;height:35px;background:#f9eca8;"></div><div class="r" style="left:533px;top:755px;width:91px;height:35px;background:#f9eca8;"></div><div class="r" style="left:624px;top:755px;width:91px;height:35px;background:#fff4c4;"></div><div class="r" style="left:715px;top:755px;width:91px;height:35px;background:#fff4c4;"></div><div class="r" style="left:806px;top:755px;width:91px;height:35px;background:#f9eca8;"></div><div class="r" style="left:1147px;top:755px;width:125px;height:35px;background:#fff4c4;"></div><div class="r" style="left:1272px;top:755px;width:125px;height:35px;background:#fff4c4;"></div><svg style="left:38px;top:765px" width="18" height="14" viewBox="0 0 18 14"><rect x="0.5" y="0.5" width="17" height="13" fill="#fff" stroke="#868a8e" stroke-width="1"/><rect x="0.5" y="0.5" width="17" height="2" fill="#7e8387"/><rect x="12.6" y="1.7" width="0.9" height="0.8" fill="#c8cacc"/><rect x="14.4" y="1.7" width="0.9" height="0.8" fill="#c8cacc"/><rect x="5" y="3.9" width="6" height="7.2" fill="#0a74da"/><path d="M2.1 4.5h1.7M2.1 6.5h1.7M2.1 8.5h1.7M12.2 4.5h3.7M12.2 6.5h3.7M12.2 8.5h2.7" stroke="#7c7c7c" stroke-width="1"/></svg><div class="t" style="top:766.22px;font-size:14.5px;line-height:14.5px;left:63.00px;letter-spacing:-0.092px">İstemci Sunucu Çalışma Zamanı ...</div><div class="t" style="top:766.22px;font-size:14.5px;line-height:14.5px;right:1393.50px;"><span style="display:inline-block;transform:scaleX(0.87);transform-origin:100% 50%">%</span>0,2</div><div class="t" style="top:766.22px;font-size:14.5px;line-height:14.5px;right:1302.50px;">1,4 MB</div><div class="t" style="top:766.22px;font-size:14.5px;line-height:14.5px;right:1211.50px;">0 MB/sn</div><div class="t" style="top:766.22px;font-size:14.5px;line-height:14.5px;right:1120.10px;letter-spacing:0.4px;">0 Mb/sn</div><div class="t" style="top:766.22px;font-size:14.5px;line-height:14.5px;right:1029.50px;"><span style="display:inline-block;transform:scaleX(0.87);transform-origin:100% 50%">%</span>0,1</div><div class="t" style="top:766.22px;font-size:14.5px;line-height:14.5px;left:905.00px;letter-spacing:-0.1px">GPU 0 - 3D</div><div class="t" style="top:766.22px;font-size:14.5px;line-height:14.5px;left:1155.00px;">Çok düşük</div><div class="t" style="top:766.22px;font-size:14.5px;line-height:14.5px;left:1280.00px;">Çok düşük</div><div class="r" style="left:442px;top:790px;width:91px;height:35px;background:#f9eca8;"></div><div class="r" style="left:533px;top:790px;width:91px;height:35px;background:#f9eca8;"></div><div class="r" style="left:624px;top:790px;width:91px;height:35px;background:#fff4c4;"></div><div class="r" style="left:715px;top:790px;width:91px;height:35px;background:#fff4c4;"></div><div class="r" style="left:806px;top:790px;width:91px;height:35px;background:#fff4c4;"></div><div class="r" style="left:1147px;top:790px;width:125px;height:35px;background:#fff4c4;"></div><div class="r" style="left:1272px;top:790px;width:125px;height:35px;background:#fff4c4;"></div><svg style="left:12px;top:801px" width="10" height="13"><path d="M1.6 0.8 L7.2 6 L1.6 11.2" fill="none" stroke="#a2a2a2" stroke-width="1.5"/></svg><svg style="left:37px;top:800px" width="20.00" height="16.67" viewBox="0 0 30 25"><path d="M2.5 17 A13 13 0 0 1 28.5 17 V21" fill="none" stroke="#9c9c9c" stroke-width="1"/><path d="M5.5 17 A10 10 0 0 1 25.5 17 V21" fill="none" stroke="#1f1819" stroke-width="5"/><path d="M12 7.6 A10 10 0 0 1 23 10.5" fill="none" stroke="#b81818" stroke-width="3.4"/><path d="M20.5 11 L26.5 1.5 L23.5 10 Z" fill="#ff2a2a"/><circle cx="15.5" cy="15" r="6" fill="#050505" stroke="#cfcfcf" stroke-width="1.2"/><text x="1.8" y="20" font-family="Liberation Sans" font-weight="bold" font-style="italic" font-size="9.6" fill="#ffffff" stroke="#9a2020" stroke-width="0.35">GPU</text><text x="1.5" y="25.5" font-family="Liberation Sans" font-weight="bold" font-style="italic" font-size="7" fill="#f3e3e3" stroke="#a02020" stroke-width="0.3" textLength="26.5">Tweak-II</text></svg><div class="t" style="top:801.22px;font-size:14.5px;line-height:14.5px;left:63.00px;letter-spacing:-0.227px">GPU Tweak II</div><div class="t" style="top:801.22px;font-size:14.5px;line-height:14.5px;right:1393.50px;"><span style="display:inline-block;transform:scaleX(0.87);transform-origin:100% 50%">%</span>0,1</div><div class="t" style="top:801.22px;font-size:14.5px;line-height:14.5px;right:1302.50px;">10,0 MB</div><div class="t" style="top:801.22px;font-size:14.5px;line-height:14.5px;right:1211.50px;">0 MB/sn</div><div class="t" style="top:801.22px;font-size:14.5px;line-height:14.5px;right:1120.10px;letter-spacing:0.4px;">0 Mb/sn</div><div class="t" style="top:801.22px;font-size:14.5px;line-height:14.5px;right:1029.50px;">%0</div><div class="t" style="top:801.22px;font-size:14.5px;line-height:14.5px;left:1155.00px;">Çok düşük</div><div class="t" style="top:801.22px;font-size:14.5px;line-height:14.5px;left:1280.00px;">Çok düşük</div><div class="r" style="left:442px;top:825px;width:91px;height:35px;background:#f9eca8;"></div><div class="r" style="left:533px;top:825px;width:91px;height:35px;background:#f9eca8;"></div><div class="r" style="left:624px;top:825px;width:91px;height:35px;background:#fff4c4;"></div><div class="r" style="left:715px;top:825px;width:91px;height:35px;background:#fff4c4;"></div><div class="r" style="left:806px;top:825px;width:91px;height:35px;background:#fff4c4;"></div><div class="r" style="left:1147px;top:825px;width:125px;height:35px;background:#fff4c4;"></div><div class="r" style="left:1272px;top:825px;width:125px;height:35px;background:#fff4c4;"></div><svg style="left:12px;top:836px" width="10" height="13"><path d="M1.6 0.8 L7.2 6 L1.6 11.2" fill="none" stroke="#a2a2a2" stroke-width="1.5"/></svg><svg style="left:37px;top:832px" width="20" height="20" viewBox="0 0 20 20"><defs><linearGradient id="gg" x1="0" y1="0" x2="1" y2="1"><stop offset="0" stop-color="#d2f3ff"/><stop offset="1" stop-color="#6f9fe6"/></linearGradient></defs><rect x="0.5" y="0.5" width="19" height="19" fill="url(#gg)" stroke="#b9cde3" stroke-width="1"/><path d="M17.03 8.43 L17.03 11.57 L14.96 11.87 L14.83 12.19 L16.08 13.86 L13.86 16.08 L12.19 14.83 L11.87 14.96 L11.57 17.03 L8.43 17.03 L8.13 14.96 L7.81 14.83 L6.14 16.08 L3.92 13.86 L5.17 12.19 L5.04 11.87 L2.97 11.57 L2.97 8.43 L5.04 8.13 L5.17 7.81 L3.92 6.14 L6.14 3.92 L7.81 5.17 L8.13 5.04 L8.43 2.97 L11.57 2.97 L11.87 5.04 L12.19 5.17 L13.86 3.92 L16.08 6.14 L14.83 7.81 L14.96 8.13Z" fill="#fff"/><circle cx="10" cy="10" r="2.6" fill="#9cc3ee"/></svg><div class="t" style="top:836.22px;font-size:14.5px;line-height:14.5px;left:63.00px;letter-spacing:0.076px">Hizmet Ana Bilgisayarı: Uzaktan...</div><div class="t" style="top:836.22px;font-size:14.5px;line-height:14.5px;right:1393.50px;"><span style="display:inline-block;transform:scaleX(0.87);transform-origin:100% 50%">%</span>0,1</div><div class="t" style="top:836.22px;font-size:14.5px;line-height:14.5px;right:1302.50px;">6,9 MB</div><div class="t" style="top:836.22px;font-size:14.5px;line-height:14.5px;right:1211.50px;">0 MB/sn</div><div class="t" style="top:836.22px;font-size:14.5px;line-height:14.5px;right:1120.10px;letter-spacing:0.4px;">0 Mb/sn</div><div class="t" style="top:836.22px;font-size:14.5px;line-height:14.5px;right:1029.50px;">%0</div><div class="t" style="top:836.22px;font-size:14.5px;line-height:14.5px;left:1155.00px;">Çok düşük</div><div class="t" style="top:836.22px;font-size:14.5px;line-height:14.5px;left:1280.00px;">Çok düşük</div><div class="r" style="left:442px;top:860px;width:91px;height:35px;background:#f9eca8;"></div><div class="r" style="left:533px;top:860px;width:91px;height:35px;background:#f9eca8;"></div><div class="r" style="left:624px;top:860px;width:91px;height:35px;background:#fff4c4;"></div><div class="r" style="left:715px;top:860px;width:91px;height:35px;background:#fff4c4;"></div><div class="r" style="left:806px;top:860px;width:91px;height:35px;background:#fff4c4;"></div><div class="r" style="left:1147px;top:860px;width:125px;height:35px;background:#fff4c4;"></div><div class="r" style="left:1272px;top:860px;width:125px;height:35px;background:#fff4c4;"></div><svg style="left:38px;top:870px" width="18" height="14" viewBox="0 0 18 14"><rect x="0.5" y="0.5" width="17" height="13" fill="#fff" stroke="#868a8e" stroke-width="1"/><rect x="0.5" y="0.5" width="17" height="2" fill="#7e8387"/><rect x="12.6" y="1.7" width="0.9" height="0.8" fill="#c8cacc"/><rect x="14.4" y="1.7" width="0.9" height="0.8" fill="#c8cacc"/><rect x="5" y="3.9" width="6" height="7.2" fill="#0a74da"/><path d="M2.1 4.5h1.7M2.1 6.5h1.7M2.1 8.5h1.7M12.2 4.5h3.7M12.2 6.5h3.7M12.2 8.5h2.7" stroke="#7c7c7c" stroke-width="1"/></svg><div class="t" style="top:871.22px;font-size:14.5px;line-height:14.5px;left:63.00px;letter-spacing:-0.015px">Host Process for Setting Synchr...</div><div class="t" style="top:871.22px;font-size:14.5px;line-height:14.5px;right:1393.50px;"><span style="display:inline-block;transform:scaleX(0.87);transform-origin:100% 50%">%</span>0,1</div><div class="t" style="top:871.22px;font-size:14.5px;line-height:14.5px;right:1302.50px;">1,8 MB</div><div class="t" style="top:871.22px;font-size:14.5px;line-height:14.5px;right:1211.50px;">0 MB/sn</div><div class="t" style="top:871.22px;font-size:14.5px;line-height:14.5px;right:1120.10px;letter-spacing:0.4px;">0 Mb/sn</div><div class="t" style="top:871.22px;font-size:14.5px;line-height:14.5px;right:1029.50px;">%0</div><div class="t" style="top:871.22px;font-size:14.5px;line-height:14.5px;left:1155.00px;">Çok düşük</div><div class="t" style="top:871.22px;font-size:14.5px;line-height:14.5px;left:1280.00px;">Çok düşük</div><div class="r" style="left:442px;top:895px;width:91px;height:35px;background:#f9eca8;"></div><div class="r" style="left:533px;top:895px;width:91px;height:35px;background:#f9eca8;"></div><div class="r" style="left:624px;top:895px;width:91px;height:35px;background:#fff4c4;"></div><div class="r" style="left:715px;top:895px;width:91px;height:35px;background:#fff4c4;"></div><div class="r" style="left:806px;top:895px;width:91px;height:35px;background:#fff4c4;"></div><div class="r" style="left:1147px;top:895px;width:125px;height:35px;background:#fff4c4;"></div><div class="r" style="left:1272px;top:895px;width:125px;height:35px;background:#fff4c4;"></div><svg style="left:12px;top:906px" width="10" height="13"><path d="M1.6 0.8 L7.2 6 L1.6 11.2" fill="none" stroke="#a2a2a2" stroke-width="1.5"/></svg><svg style="left:37px;top:902px" width="20" height="20" viewBox="0 0 20 20"><defs><linearGradient id="gg" x1="0" y1="0" x2="1" y2="1"><stop offset="0" stop-color="#d2f3ff"/><stop offset="1" stop-color="#6f9fe6"/></linearGradient></defs><rect x="0.5" y="0.5" width="19" height="19" fill="url(#gg)" stroke="#b9cde3" stroke-width="1"/><path d="M17.03 8.43 L17.03 11.57 L14.96 11.87 L14.83 12.19 L16.08 13.86 L13.86 16.08 L12.19 14.83 L11.87 14.96 L11.57 17.03 L8.43 17.03 L8.13 14.96 L7.81 14.83 L6.14 16.08 L3.92 13.86 L5.17 12.19 L5.04 11.87 L2.97 11.57 L2.97 8.43 L5.04 8.13 L5.17 7.81 L3.92 6.14 L6.14 3.92 L7.81 5.17 L8.13 5.04 L8.43 2.97 L11.57 2.97 L11.87 5.04 L12.19 5.17 L13.86 3.92 L16.08 6.14 L14.83 7.81 L14.96 8.13Z" fill="#fff"/><circle cx="10" cy="10" r="2.6" fill="#9cc3ee"/></svg><div class="t" style="top:906.22px;font-size:14.5px;line-height:14.5px;left:63.00px;letter-spacing:0.22px">Hizmet Ana Bilgisayarı: Window...</div><div class="t" style="top:906.22px;font-size:14.5px;line-height:14.5px;right:1393.50px;"><span style="display:inline-block;transform:scaleX(0.87);transform-origin:100% 50%">%</span>0,1</div><div class="t" style="top:906.22px;font-size:14.5px;line-height:14.5px;right:1302.50px;">1,5 MB</div><div class="t" style="top:906.22px;font-size:14.5px;line-height:14.5px;right:1211.50px;">0 MB/sn</div><div class="t" style="top:906.22px;font-size:14.5px;line-height:14.5px;right:1120.10px;letter-spacing:0.4px;">0 Mb/sn</div><div class="t" style="top:906.22px;font-size:14.5px;line-height:14.5px;right:1029.50px;">%0</div><div class="t" style="top:906.22px;font-size:14.5px;line-height:14.5px;left:1155.00px;">Çok düşük</div><div class="t" style="top:906.22px;font-size:14.5px;line-height:14.5px;left:1280.00px;">Çok düşük</div><div class="r" style="left:442px;top:930px;width:91px;height:35px;background:#fff4c4;"></div><div class="r" style="left:533px;top:930px;width:91px;height:35px;background:#f9eca8;"></div><div class="r" style="left:624px;top:930px;width:91px;height:35px;background:#fff4c4;"></div><div class="r" style="left:715px;top:930px;width:91px;height:35px;background:#fff4c4;"></div><div class="r" style="left:806px;top:930px;width:91px;height:35px;background:#fff4c4;"></div><div class="r" style="left:1147px;top:930px;width:125px;height:35px;background:#fff4c4;"></div><div class="r" style="left:1272px;top:930px;width:125px;height:35px;background:#fff4c4;"></div><svg style="left:37.5px;top:936.5px" width="19" height="21" viewBox="0 0 19 21"><path d="M9.5 0.5 L18.2 5.5 V15.5 L9.5 20.5 L0.8 15.5 V5.5 Z" fill="#00a88e"/><path d="M0.8 15.5 L9.5 11 L18.2 15.5 L9.5 20.5 Z" fill="#009a83"/><path d="M6.2 4.8 C8.2 3.8 10.8 3.8 12.8 4.8 M7.3 6.6 C8.6 6 10.4 6 11.7 6.6" fill="none" stroke="#9fe3d5" stroke-width="0.9"/><path d="M7.5 10.5 V8.8 C7.5 7.3 11.5 7.3 11.5 8.8 V10.5" fill="none" stroke="#bdeee4" stroke-width="1"/><rect x="6" y="10.3" width="7" height="5" fill="#ffb619"/></svg><div class="t" style="top:941.22px;font-size:14.5px;line-height:14.5px;left:63.00px;letter-spacing:-0.109px">Kaspersky Secure Connection (3...</div><div class="t" style="top:941.22px;font-size:14.5px;line-height:14.5px;right:1393.50px;">%0</div><div class="t" style="top:941.22px;font-size:14.5px;line-height:14.5px;right:1302.50px;">1,5 MB</div><div class="t" style="top:941.22px;font-size:14.5px;line-height:14.5px;right:1211.50px;">0 MB/sn</div><div class="t" style="top:941.22px;font-size:14.5px;line-height:14.5px;right:1120.10px;letter-spacing:0.4px;">0 Mb/sn</div><div class="t" style="top:941.22px;font-size:14.5px;line-height:14.5px;right:1029.50px;">%0</div><div class="t" style="top:941.22px;font-size:14.5px;line-height:14.5px;left:1155.00px;">Çok düşük</div><div class="t" style="top:941.22px;font-size:14.5px;line-height:14.5px;left:1280.00px;">Çok düşük</div><div class="r" style="left:442px;top:965px;width:91px;height:4px;background:#fff4c4;"></div><div class="r" style="left:533px;top:965px;width:91px;height:4px;background:#f9eca8;"></div><div class="r" style="left:624px;top:965px;width:91px;height:4px;background:#fff4c4;"></div><div class="r" style="left:715px;top:965px;width:91px;height:4px;background:#fff4c4;"></div><div class="r" style="left:806px;top:965px;width:91px;height:4px;background:#fff4c4;"></div><div class="r" style="left:1147px;top:965px;width:250px;height:4px;background:#fff4c4;"></div><div class="r" style="left:442px;top:195px;width:1px;height:774px;background:#eedcb2;"></div><div class="r" style="left:442px;top:160px;width:1px;height:35px;background:#dfe5ea;"></div><div class="r" style="left:533px;top:195px;width:1px;height:774px;background:#eedcb2;"></div><div class="r" style="left:533px;top:160px;width:1px;height:35px;background:#dfe5ea;"></div><div class="r" style="left:624px;top:195px;width:1px;height:774px;background:#eedcb2;"></div><div class="r" style="left:624px;top:160px;width:1px;height:35px;background:#dfe5ea;"></div><div class="r" style="left:715px;top:195px;width:1px;height:774px;background:#eedcb2;"></div><div class="r" style="left:715px;top:160px;width:1px;height:35px;background:#dfe5ea;"></div><div class="r" style="left:806px;top:195px;width:1px;height:774px;background:#eedcb2;"></div><div class="r" style="left:806px;top:160px;width:1px;height:35px;background:#dfe5ea;"></div><div class="r" style="left:897px;top:195px;width:1px;height:774px;background:#eedcb2;"></div><div class="r" style="left:897px;top:160px;width:1px;height:35px;background:#dfe5ea;"></div><div class="r" style="left:1147px;top:195px;width:1px;height:774px;background:#eedcb2;"></div><div class="r" style="left:1147px;top:160px;width:1px;height:35px;background:#dfe5ea;"></div><div class="r" style="left:1272px;top:195px;width:1px;height:774px;background:#eedcb2;"></div><div class="r" style="left:1272px;top:160px;width:1px;height:35px;background:#dfe5ea;"></div><div class="r" style="left:1397px;top:195px;width:1px;height:774px;background:#eedcb2;"></div><div class="r" style="left:1397px;top:160px;width:1px;height:35px;background:#dfe5ea;"></div><div class="r" style="left:1900px;top:160px;width:20px;height:809px;background:#f0f0f0;"></div><div class="r" style="left:1900px;top:181px;width:19px;height:97px;background:#cdcdcd;"></div><svg style="left:1900px;top:160px" width="20" height="21"><path d="M5.5 13.5 L10 9 L14.5 13.5" fill="none" stroke="#606060" stroke-width="2"/></svg><svg style="left:1900px;top:947px" width="20" height="21"><path d="M5.5 8.5 L10 13 L14.5 8.5" fill="none" stroke="#606060" stroke-width="2"/></svg><div class="r" style="left:0px;top:969px;width:1920px;height:1px;background:#a0a0a0;"></div><svg style="left:9px;top:987px" width="26" height="26"><circle cx="13" cy="13" r="11.5" fill="none" stroke="#999" stroke-width="1"/><path d="M7.3 15.5 L13 9.8 L18.7 15.5" fill="none" stroke="#a8a8a8" stroke-width="1.5"/></svg><div class="t" style="top:993.97px;font-size:14.5px;line-height:14.5px;left:42.00px;">Daha az ayrıntı</div><div class="r" style="left:1793px;top:986px;width:116px;height:27px;background:#e1e1e1;border:1px solid #adadad;"></div><div class="t" style="top:992.42px;font-size:14.5px;line-height:14.5px;left:1797.00px;">Görevi sonlandır</div><div class="r" style="left:0;top:1030px;width:1920px;height:50px;background:linear-gradient(90deg,#1b1a28 0.00%,#1c1a2c 15.62%,#201a30 21.88%,#2b1b37 27.08%,#45253a 35.42%,#42203a 43.23%,#3a1e45 51.04%,#2e2358 56.25%,#2d3558 62.76%,#2a2f5c 65.36%,#241c55 69.27%,#1f1c40 74.48%,#1c1b30 79.69%,#1b1a2c 85.42%,#1a1a2b 100.00%)"></div><div class="r" style="left:432px;top:1030px;width:61px;height:50px;background:rgba(255,255,255,0.2);"></div><div class="r" style="left:556px;top:1030px;width:61px;height:50px;background:#b0602f;"></div><div class="r" style="left:623px;top:1030px;width:35px;height:50px;background:#4f6b49;"></div><div class="r" style="left:658px;top:1030px;width:16px;height:50px;background:#573b55;"></div><div class="r" style="left:250px;top:1077px;width:52px;height:3px;background:#76b9ed;"></div><div class="r" style="left:375px;top:1077px;width:51px;height:3px;background:#76b9ed;"></div><div class="r" style="left:432px;top:1077px;width:61px;height:3px;background:#76b9ed;"></div><div class="r" style="left:499px;top:1077px;width:51px;height:3px;background:#76b9ed;"></div><div class="r" style="left:556px;top:1077px;width:61px;height:3px;background:#ff7a1a;"></div><div class="r" style="left:623px;top:1077px;width:51px;height:3px;background:#58d23b;"></div><svg style="left:19px;top:1044px" width="22" height="22" viewBox="0 0 22 22"><path d="M0 3 L9 1.8 V10.2 H0 Z M10.2 1.6 L21 0 V10.2 H10.2 Z M0 11.4 H9 V19.8 L0 18.6 Z M10.2 11.4 H21 V21.6 L10.2 20 Z" fill="#fff"/></svg><svg style="left:79px;top:1044px" width="23" height="23" viewBox="0 0 23 23"><circle cx="13.5" cy="8.2" r="6.8" fill="none" stroke="#fff" stroke-width="1.3"/><path d="M8.6 13 L1 20.6" stroke="#fff" stroke-width="1.4"/></svg><svg style="left:139px;top:1044px" width="23" height="21" viewBox="0 0 23 21"><path d="M1.4 0.8 V3.9 H13.4 V0.8 M1.4 20.2 V17 H13.4 V20.2" fill="none" stroke="#fff" stroke-width="1.3"/><rect x="1.4" y="6.9" width="12" height="7.6" fill="none" stroke="#fff" stroke-width="1.3"/><path d="M19.3 0.8 V20.2" stroke="#fff" stroke-width="1.2"/><rect x="17.8" y="7" width="3" height="3.2" fill="#fff"/></svg><svg style="left:199px;top:1042px" width="30" height="25" viewBox="0 0 30 25"><defs><linearGradient id="fg" x1="0" y1="0" x2="0" y2="1"><stop offset="0" stop-color="#ffdb6e"/><stop offset="1" stop-color="#ffc83a"/></linearGradient></defs><path d="M1 2.2 Q1 1 2.2 1 H13 L15 3 V6 H1 Z" fill="#e6a00e"/><rect x="1" y="3.2" width="27.4" height="19.6" rx="1.3" fill="url(#fg)"/><path d="M6 24 V15.6 Q6 13.3 8.2 13.3 H21.6 Q23.8 13.3 23.8 15.6 V24 H19.5 V17.2 H10 V24 Z" fill="#3b97e3"/></svg><svg style="left:260px;top:1040px" width="31" height="31" viewBox="0 0 31 31"><circle cx="16.1" cy="14.9" r="14.1" fill="none" stroke="#ff1f4e" stroke-width="1.6"/><ellipse cx="19.4" cy="15" rx="10.9" ry="13.3" fill="none" stroke="#ff1f4e" stroke-width="1.6"/><path d="M18.7 5.3 A5.7 9.5 0 0 1 18.7 24.1" fill="none" stroke="#ff1f4e" stroke-width="1.2"/></svg><svg style="left:322px;top:1040px" width="32" height="30" viewBox="0 0 32 30"><path d="M1 9.6 L16.5 0.6 L31.2 9.6 Z" fill="#0b62b5"/><rect x="1" y="9.5" width="30.2" height="19.5" fill="#1d8fe0"/><path d="M16.5 18.6 L31.2 9.5 V29 Z" fill="#39c5f3"/><path d="M4 10.2 H28.6 L16.5 18.6 Z" fill="#f0f0f0"/></svg><svg style="left:384.8px;top:1039.8px" width="30.4" height="30.4" viewBox="0 0 30.4 30.4"><circle cx="15.2" cy="15.2" r="15.2" fill="#5865f2"/><g transform="translate(15.2,15.2) scale(1.52)"><path d="M-5.6 -3.6 C-4.2 -4.5 -2.8 -4.8 -2 -4.8 L-1.6 -4.1 C-0.5 -4.3 0.5 -4.3 1.6 -4.1 L2 -4.8 C2.8 -4.8 4.2 -4.5 5.6 -3.6 C6.6 -1.6 7 0.8 6.8 3 C5.6 3.9 4.4 4.4 3.4 4.6 L2.6 3.4 C1 3.9 -1 3.9 -2.6 3.4 L-3.4 4.6 C-4.4 4.4 -5.6 3.9 -6.8 3 C-7 0.8 -6.6 -1.6 -5.6 -3.6 Z" fill="#fff"/><ellipse cx="-2.3" cy="0.6" rx="1.2" ry="1.35" fill="#5865f2"/><ellipse cx="2.3" cy="0.6" rx="1.2" ry="1.35" fill="#5865f2"/></g></svg><svg style="left:397px;top:1052px" width="20" height="20" viewBox="0 0 20 20"><circle cx="10" cy="10" r="9.3" fill="#f05a5a"/><circle cx="10" cy="10" r="3.8" fill="#fff"/></svg><svg style="left:447px;top:1043px" width="29" height="26" viewBox="0 0 29 26"><path d="M0.9 6.2 L6 5.3 L7.4 6 V19.8 L0.9 19.6 Z" fill="#d2d2d2"/><path d="M4.2 6 L7.4 6 V19.8 L4.2 19.7 Z" fill="#e6e6e6"/><rect x="0.9" y="6.4" width="1.4" height="2.2" fill="#2c7a2c"/><ellipse cx="17.5" cy="22.6" rx="6.8" ry="2.7" fill="#d9d9d9"/><path d="M15 17.5 H20 L21 21 H14 Z" fill="#c8c8c8"/><path d="M7.4 0.9 L27.3 3.2 V19.4 L7.4 15.6 Z" fill="#dedede"/><path d="M8.9 2.7 L25.9 4.8 V17.6 L8.9 14.2 Z" fill="#f7fbfd"/><path d="M8.9 9.6 L10.6 8.9 L13.2 4.9 L15.1 9.8 L19 11 L21.2 7.6 L23 11.6 L25.9 11 V17.6 L8.9 14.2 Z" fill="#c5e5f6"/><path d="M8.9 9.6 L10.6 8.9 L13.2 4.9 L15.1 9.8 L19 11 L21.2 7.6 L23 11.6 L25.9 11" fill="none" stroke="#3d8fcf" stroke-width="0.9"/></svg><svg style="left:508px;top:1043px" width="30.00" height="25.00" viewBox="0 0 30 25"><path d="M2.5 17 A13 13 0 0 1 28.5 17 V21" fill="none" stroke="#9c9c9c" stroke-width="1"/><path d="M5.5 17 A10 10 0 0 1 25.5 17 V21" fill="none" stroke="#1f1819" stroke-width="5"/><path d="M12 7.6 A10 10 0 0 1 23 10.5" fill="none" stroke="#b81818" stroke-width="3.4"/><path d="M20.5 11 L26.5 1.5 L23.5 10 Z" fill="#ff2a2a"/><circle cx="15.5" cy="15" r="6" fill="#050505" stroke="#cfcfcf" stroke-width="1.2"/><text x="1.8" y="20" font-family="Liberation Sans" font-weight="bold" font-style="italic" font-size="9.6" fill="#ffffff" stroke="#9a2020" stroke-width="0.35">GPU</text><text x="1.5" y="25.5" font-family="Liberation Sans" font-weight="bold" font-style="italic" font-size="7" fill="#f3e3e3" stroke="#a02020" stroke-width="0.3" textLength="26.5">Tweak-II</text></svg><svg style="left:570px;top:1040px" width="31" height="31" viewBox="0 0 31 31"><circle cx="15.5" cy="15.5" r="15" fill="#1ed760"/><path d="M6.5 11.3 C12 9.3 19 9.8 24.3 12.8 M7.5 16 C12 14.5 17.5 15 22 17.3 M8.5 20.3 C12.3 19.3 16.5 19.7 20 21.3" fill="none" stroke="#111" stroke-width="2.3" stroke-linecap="round"/></svg><svg style="left:632.8px;top:1039.8px" width="30.4" height="30.4" viewBox="0 0 30.4 30.4"><circle cx="15.2" cy="15.2" r="15.2" fill="#0a74e0"/><g transform="scale(1.0133333333333332)" fill="none" stroke="#fff" stroke-linecap="round"><path d="M16.8 24.2 C12 17 8.5 8.5 12 5.8 C14 4.5 16 6.5 16.8 9" stroke-width="2.2"/><path d="M4.2 12.5 C10 10.2 20 10.2 24.8 14.8 C27 17.5 23.5 19.8 19.5 19.5" stroke-width="2.1"/><path d="M22.5 7.3 C23 13 16.5 22 11.5 23.5 C8 24.5 6.5 21 8.8 17.2" stroke-width="2.1"/></g></svg><svg style="left:1640px;top:1050px" width="17" height="10" viewBox="0 0 17 10"><path d="M0.8 9 L8.3 1.2 L15.8 9" fill="none" stroke="#fff" stroke-width="1.1"/></svg><svg style="left:1667px;top:1046px" width="22" height="18" viewBox="0 0 22 18"><rect x="3.5" y="0.5" width="17.5" height="12.5" fill="none" stroke="#fff" stroke-width="1"/><rect x="0.5" y="0.5" width="4" height="4" fill="#1b1a2b" stroke="#fff" stroke-width="1"/><path d="M2.5 4.5 V16.5 M8 16.5 H16 M12 13 V16.5" stroke="#fff" stroke-width="1"/></svg><svg style="left:1697px;top:1045px" width="23" height="20" viewBox="0 0 23 20"><path d="M0.5 6.5 H4 L9 1.5 V18.5 L4 13.5 H0.5 Z" fill="none" stroke="#fff" stroke-width="1"/><path d="M12 7.5 Q13.5 10 12 12.5 M14.8 5 Q17.5 10 14.8 15 M17.8 2.5 Q21.5 10 17.8 17.5" fill="none" stroke="#fff" stroke-width="1"/></svg><div class="t" style="top:1049.57px;font-size:13.5px;line-height:13.5px;color:#fff;left:1732.00px;transform:scaleY(1.12);transform-origin:0 80%;">TUR</div><div class="t" style="top:1036.90px;font-size:14px;line-height:14px;color:#fff;left:1793.00px;">22:55</div><div class="t" style="top:1059.75px;font-size:14px;line-height:14px;color:#fff;left:1779.50px;">6.06.2021</div><svg style="left:1868px;top:1044px" width="23" height="22" viewBox="0 0 23 22"><path d="M0.8 0.8 H21.1 V18.1 H9 L11.5 21 L7.5 18.1 H0.8 Z" fill="#fff"/><path d="M4.6 5.2 H16.8 M4.6 9.2 H16.8 M4.6 13.2 H16.8" stroke="#1b1a2c" stroke-width="1.2"/></svg><svg style="left:1878px;top:1054px" width="22" height="22" viewBox="0 0 22 22"><circle cx="10.7" cy="10.5" r="9.9" fill="rgba(52,52,56,0.63)" stroke="#8c8c8c" stroke-width="1"/></svg><div class="t" style="top:1057.95px;font-size:14px;line-height:14px;color:#fff;left:1884.30px;font-weight:bold">3</div><div class="r" style="left:1914px;top:1030px;width:1px;height:50px;background:#787888;"></div></body></html>
